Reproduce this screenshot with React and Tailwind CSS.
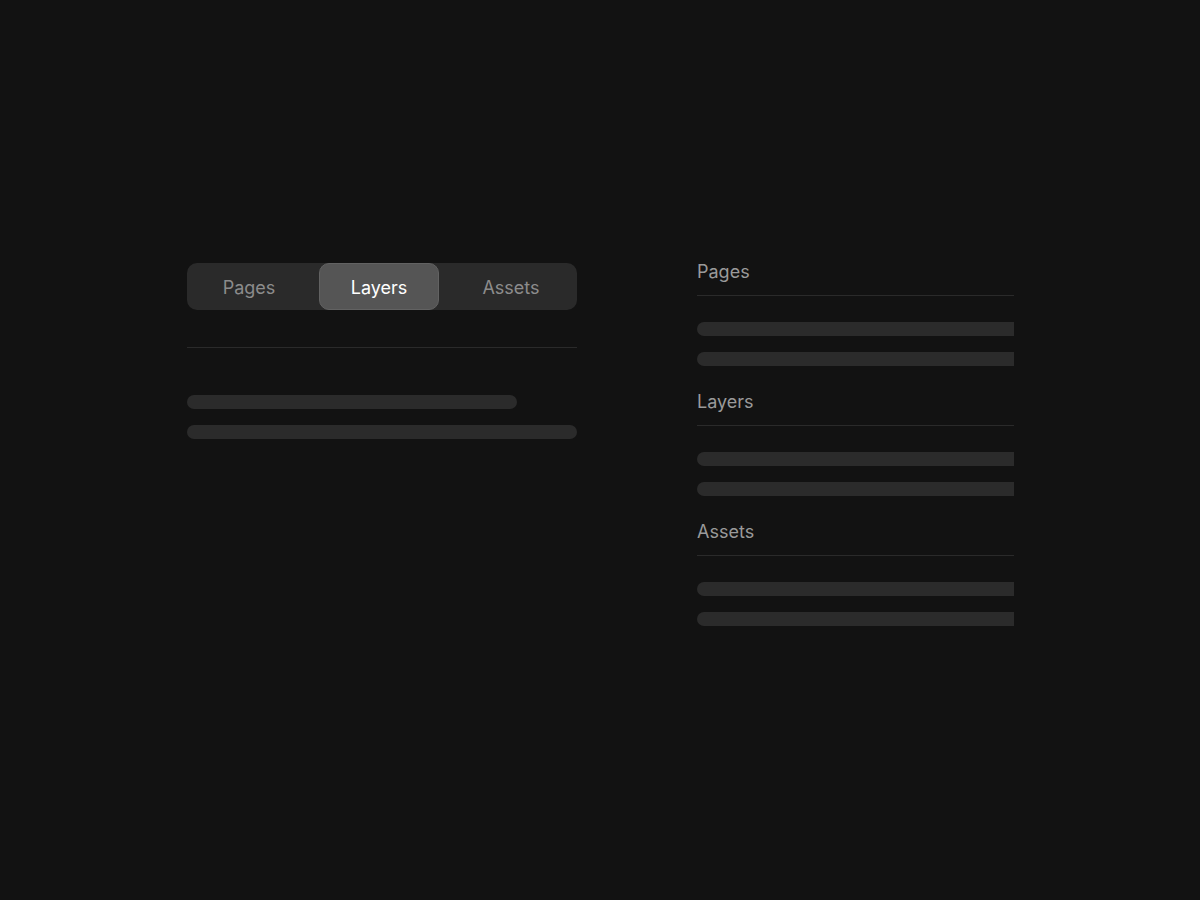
import React, { useState } from 'react';

const tabs = [
  { id: 'pages', label: 'Pages', w: 'w-[132px] pr-[8px]' },
  { id: 'layers', label: 'Layers', w: 'w-[120px]' },
  { id: 'assets', label: 'Assets', w: 'w-[138px] pl-[6px]' },
];

const Section = ({ title }) => (
  <div className="flex flex-col">
    <div className="text-[18px] leading-6 text-[#9a9a9a] pb-[11px] border-b border-[#2a2a2a]">{title}</div>
    <div className="flex flex-col gap-4 pt-[26px]">
      <div className="h-[14px] w-[340px] rounded-full bg-[#2b2b2b]" />
      <div className="h-[14px] w-[340px] rounded-full bg-[#2b2b2b]" />
    </div>
  </div>
);

export default function App() {
  const [active, setActive] = useState('layers');

  return (
    <div className="w-full h-screen bg-[#121212] flex items-start pl-[187px] pt-[260px] gap-[120px]" style={{ fontFamily: 'Inter, "Noto Sans", sans-serif' }}>
      {/* tabbed panel */}
      <div className="w-[390px] flex flex-col pt-[3px]">
        <div className="flex h-[47px] rounded-[10px] bg-[#2a2a2a]">
          {tabs.map(t => (
            <button
              key={t.id}
              onClick={() => setActive(t.id)}
              className={
                t.w + ' h-full flex items-center justify-center pt-[2px] text-[18px] rounded-[10px] ' +
                (active === t.id ? 'bg-[#555555] border border-[#626262] text-white' : 'text-[#8c8c8c]')
              }
            >
              {t.label}
            </button>
          ))}
        </div>
        <div className="mt-[37px] border-t border-[#2a2a2a]" />
        <div className="flex flex-col gap-4 pt-[47px]">
          <div className="h-[14px] w-[330px] rounded-full bg-[#2b2b2b]" />
          <div className="h-[14px] w-full rounded-full bg-[#2b2b2b]" />
        </div>
      </div>

      {/* stacked panel, clipped on the right */}
      <div className="w-[317px] overflow-hidden flex flex-col gap-[24px]">
        <Section title="Pages" />
        <Section title="Layers" />
        <Section title="Assets" />
      </div>
    </div>
  );
}
